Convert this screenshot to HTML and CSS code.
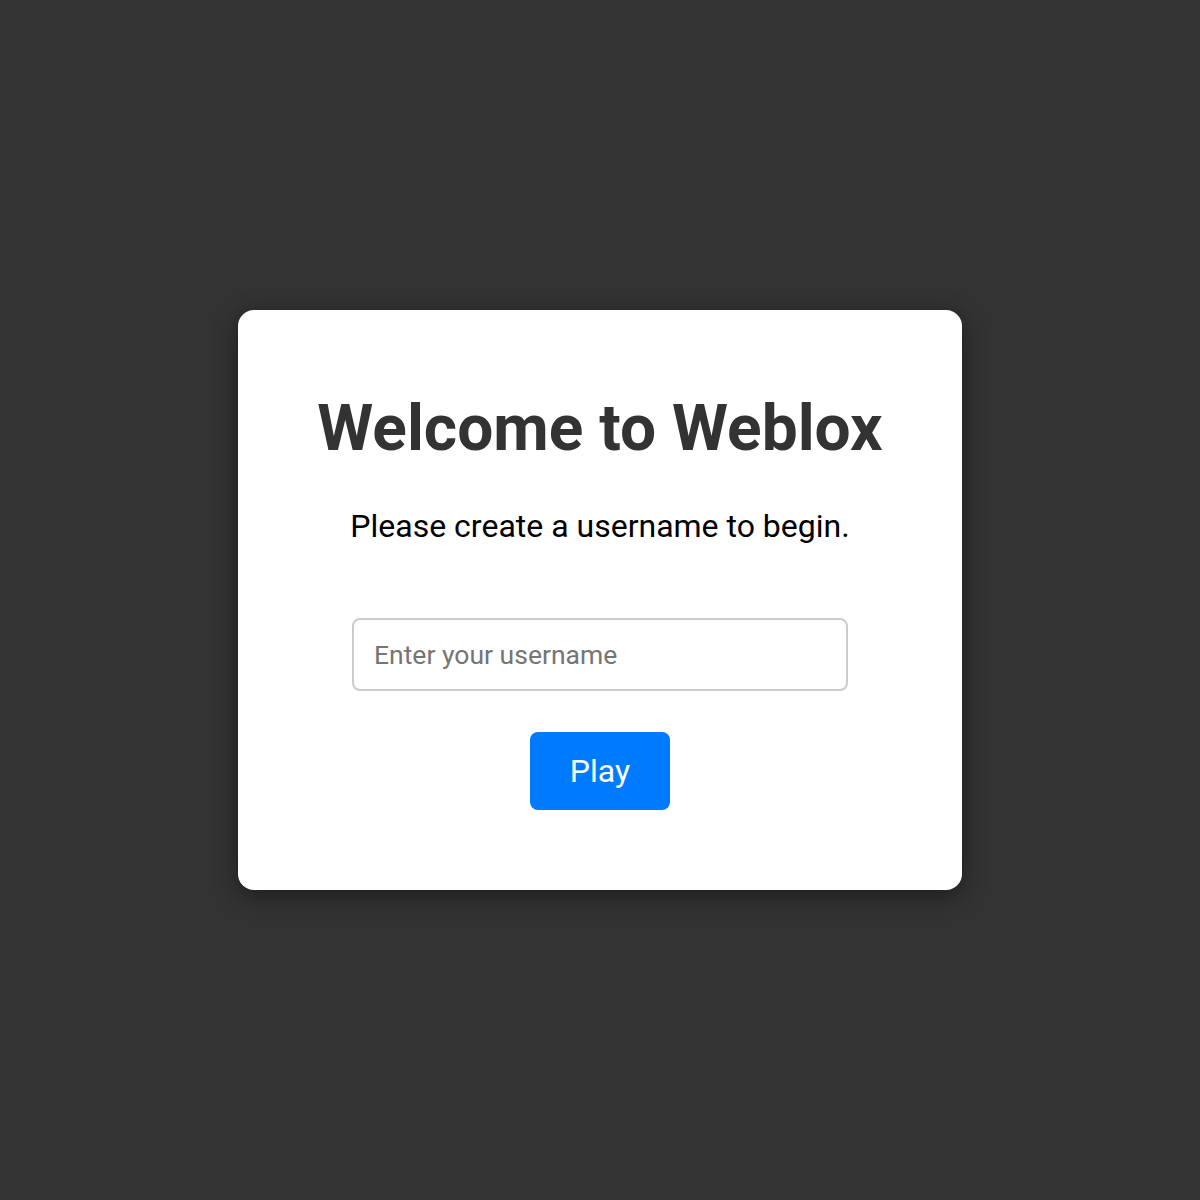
FILE: index.html
```html
<!DOCTYPE html>
<html lang="en">
<head>
<meta charset="utf-8">
<title>Weblox</title>
<link rel="stylesheet" href="styles.css">
</head>
<body>
<main class="screen">
  <section class="card">
    <h1 class="title">Welcome to Weblox</h1>
    <p class="subtitle">Please create a username to begin.</p>
    <input class="username" type="text" placeholder="Enter your username">
    <button class="play" type="button">Play</button>
  </section>
</main>
</body>
</html>
```
FILE: styles.css
```css
html, body {
  margin: 0;
  padding: 0;
  background: #333333;
  font-family: Roboto, "Liberation Sans", sans-serif;
}
.screen {
  width: 1200px;
  height: 1200px;
  display: flex;
  align-items: center;
  justify-content: center;
}
.card {
  width: 724px;
  height: 580px;
  box-sizing: border-box;
  background: #ffffff;
  border-radius: 16px;
  box-shadow: 0 6px 24px rgba(0, 0, 0, 0.45);
  padding-top: 79px;
  display: flex;
  flex-direction: column;
  align-items: center;
}
.title {
  margin: 0;
  font-size: 64px;
  line-height: 80px;
  font-weight: 700;
  color: #333333;
}
.subtitle {
  margin: 38px 0 0;
  font-size: 32px;
  line-height: 38px;
  color: #000000;
}
.username {
  margin-top: 73px;
  width: 496px;
  height: 73px;
  box-sizing: border-box;
  border: 2px solid #cccccc;
  border-radius: 8px;
  padding: 0 20px;
  font-family: Roboto, "Liberation Sans", sans-serif;
  font-size: 26.5px;
  color: #333;
  outline: none;
}
.username::placeholder {
  color: #757575;
}
.play {
  margin-top: 41px;
  width: 140px;
  height: 78px;
  border: none;
  border-radius: 8px;
  background: #007bff;
  color: #ffffff;
  font-family: Roboto, "Liberation Sans", sans-serif;
  font-size: 32px;
  cursor: pointer;
}
```
